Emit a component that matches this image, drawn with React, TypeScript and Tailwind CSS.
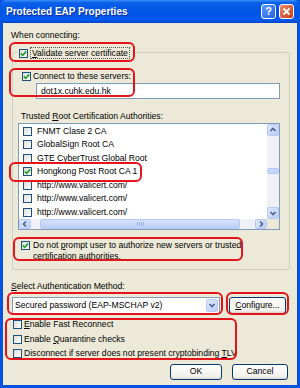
import React from "react";

const Box = ({ checked }: { checked?: boolean }) => (
  <span className="flex h-[9px] w-[9px] shrink-0 items-center justify-center border border-[#1C5180] bg-[linear-gradient(135deg,#DCDCD7,#FFFFFF)]">
    {checked && (
      <svg width="7" height="7" viewBox="0 0 7 7">
        <path d="M0.8 3.4 L2.7 5.3 L6.2 1.4" fill="none" stroke="#21A121" strokeWidth="1.6" />
      </svg>
    )}
  </span>
);

const Chevron = ({ dir }: { dir: "up" | "down" | "left" | "right" }) => {
  const d = {
    up: "M1.5 5 L4 2.5 L6.5 5",
    down: "M1.5 3 L4 5.5 L6.5 3",
    left: "M5 1.5 L2.5 4 L5 6.5",
    right: "M3 1.5 L5.5 4 L3 6.5",
  }[dir];
  return (
    <svg width="8" height="8" viewBox="0 0 8 8">
      <path d={d} fill="none" stroke="#4D6185" strokeWidth="1.6" />
    </svg>
  );
};

const ScrollBtn = ({ dir, className }: { dir: "up" | "down" | "left" | "right"; className: string }) => (
  <div className={`flex items-center justify-center rounded-[2px] border border-[#B7CAF5] bg-[linear-gradient(135deg,#DDE7FE,#BACDF8)] ${className}`}>
    <Chevron dir={dir} />
  </div>
);

const RedBox = ({ className }: { className: string }) => (
  <div className={`pointer-events-none absolute rounded-[6px] border-2 border-[#E4141B] ${className}`} />
);

const certs = [
  { name: "FNMT Clase 2 CA" },
  { name: "GlobalSign Root CA" },
  { name: "GTE CyberTrust Global Root" },
  { name: "Hongkong Post Root CA 1", checked: true },
  { name: "http://www.valicert.com/" },
  { name: "http://www.valicert.com/" },
  { name: "http://www.valicert.com/" },
];

const XpButton = ({ children, className }: { children: React.ReactNode; className: string }) => (
  <div className={`flex items-center justify-center rounded-[3px] border border-[#003C74] bg-[linear-gradient(to_bottom,#FFFFFF,#F0F0EA_85%,#D6D0C5)] ${className}`}>
    {children}
  </div>
);

export default function App() {
  return (
    <div className="relative flex h-[388px] w-[300px] flex-col bg-[#0553E1] font-['Liberation_Sans',Arial,sans-serif] text-[8.6px] leading-[11px] text-black">
      {/* title bar */}
      <div className="flex h-[23px] shrink-0 items-center justify-between rounded-t-[6px] bg-[linear-gradient(to_bottom,#3D8DF8_0%,#0A60EA_12%,#0055E5_50%,#0059EE_85%,#0048CC_100%)] pl-[6px] pr-[6px]">
        <span className="text-[10px] font-bold text-white [text-shadow:1px_1px_0_#0A2F9C]">Protected EAP Properties</span>
        <div className="flex gap-[3px]">
          <div className="flex h-[15px] w-[15px] items-center justify-center rounded-[3px] border border-white bg-[linear-gradient(135deg,#5E9BFF,#1F5FE9)] text-[11px] font-bold leading-none text-white">
            ?
          </div>
          <div className="flex h-[15px] w-[15px] items-center justify-center rounded-[3px] border border-white bg-[linear-gradient(135deg,#EE8A66,#C8391A)]">
            <svg width="9" height="9" viewBox="0 0 9 9">
              <path d="M1.5 1.5 L7.5 7.5 M7.5 1.5 L1.5 7.5" stroke="white" strokeWidth="1.8" />
            </svg>
          </div>
        </div>
      </div>

      {/* body */}
      <div className="mx-[3px] mb-[3px] flex flex-1 flex-col bg-[#ECE9D8]">
        <div className="mt-[7px] pl-[8px]">When connecting:</div>

        {/* group box */}
        <div className="ml-[9px] mr-[7px] mt-[11px] flex flex-col rounded-[3px] border border-[#D0D0BF] pb-[6.5px]">
          <div className="-mt-[6px] ml-[4px] flex h-[12px] w-fit items-center gap-[2px] bg-[#ECE9D8] px-[2px]">
            <Box checked />
            <span className="border border-dotted border-[#555] px-[1px] leading-[10px]">
              <span className="underline">V</span>alidate server certificate
            </span>
          </div>

          <div className="mt-[11.5px] flex h-[11px] items-center gap-[2px] pl-[9px]">
            <Box checked />
            <span>Connect to these servers:</span>
          </div>
          <div className="ml-[23px] mr-[9px] mt-[1.5px] flex h-[16px] items-center border border-[#7F9DB9] bg-white pl-[4px]">
            dot1x.cuhk.edu.hk
          </div>

          <div className="mt-[11.5px] pl-[8px]">
            Trusted <span className="underline">R</span>oot Certification Authorities:
          </div>

          {/* listbox */}
          <div className="ml-[5px] mr-[9px] mt-[1.5px] grid h-[107px] grid-cols-[1fr_12px] grid-rows-[1fr_10px] border border-[#7F9DB9] bg-white">
            <div className="flex flex-col overflow-hidden pt-[0.5px]">
              {certs.map((c, i) => (
                <div key={i} className="flex h-[13.5px] shrink-0 items-center gap-[5px] whitespace-nowrap pl-[4px]">
                  <Box checked={c.checked} />
                  <span>{c.name}</span>
                </div>
              ))}
            </div>
            <div className="flex flex-col bg-[#F0F1F6]">
              <ScrollBtn dir="up" className="h-[12px] w-[12px]" />
              <div className="flex flex-1 flex-col">
                <div className="mt-[32px] h-[6px] rounded-[2px] border border-[#B7CAF5] bg-[#C6D6FA]" />
              </div>
              <ScrollBtn dir="down" className="h-[12px] w-[12px]" />
            </div>
            <div className="flex bg-[#F0F1F6]">
              <ScrollBtn dir="left" className="h-[10px] w-[12px]" />
              <div className="flex flex-1 items-center">
                <div className="ml-[9px] flex h-[10px] w-[200px] items-center justify-center rounded-[2px] border border-[#B7CAF5] bg-[linear-gradient(to_bottom,#D4E0FC,#BFD0F8)]">
                  <div className="flex gap-[1px]">
                    <span className="h-[4px] w-[1px] bg-[#9FB5EA]" />
                    <span className="h-[4px] w-[1px] bg-[#9FB5EA]" />
                    <span className="h-[4px] w-[1px] bg-[#9FB5EA]" />
                    <span className="h-[4px] w-[1px] bg-[#9FB5EA]" />
                  </div>
                </div>
              </div>
              <ScrollBtn dir="right" className="h-[10px] w-[12px]" />
            </div>
            <div className="bg-[#ECE9D8]" />
          </div>

          <div className="mt-[9.5px] flex gap-[3px] pl-[8px] leading-[11.5px]">
            <div className="flex h-[11.5px] items-center">
              <Box checked />
            </div>
            <span>
              Do not <span className="underline">p</span>rompt user to authorize new servers or trusted
              <br />
              certification authorities.
            </span>
          </div>
        </div>

        <div className="mt-[10.5px] pl-[8px]">
          <span className="underline">S</span>elect Authentication Method:
        </div>

        <div className="ml-[9px] mt-[5px] flex h-[17px] gap-[9px]">
          <div className="flex w-[208px] items-center justify-between border border-[#7F9DB9] bg-white pl-[2px] pr-[1px]">
            <span>Secured password (EAP-MSCHAP v2)</span>
            <ScrollBtn dir="down" className="h-[13px] w-[12px]" />
          </div>
          <XpButton className="w-[57px]">
            <span>
              <span className="underline">C</span>onfigure...
            </span>
          </XpButton>
        </div>

        <div className="mt-[3.75px] flex flex-col pl-[10px]">
          <div className="flex h-[14.5px] items-center gap-[2px]">
            <Box />
            <span>
              <span className="underline">E</span>nable Fast Reconnect
            </span>
          </div>
          <div className="flex h-[14.5px] items-center gap-[2px]">
            <Box />
            <span>
              Enable <span className="underline">Q</span>uarantine checks
            </span>
          </div>
          <div className="flex h-[14.5px] items-center gap-[2px]">
            <Box />
            <span>
              Disconnect if server does not present cryptobinding <span className="underline">T</span>LV
            </span>
          </div>
        </div>

        <div className="mr-[9px] mt-[2.75px] flex justify-end gap-[10px]">
          <XpButton className="h-[16px] w-[52px]">OK</XpButton>
          <XpButton className="h-[16px] w-[56px]">Cancel</XpButton>
        </div>
      </div>

      {/* annotation boxes */}
      <RedBox className="left-[9px] top-[42px] h-[20px] w-[126px]" />
      <RedBox className="left-[9px] top-[68px] h-[29px] w-[126px]" />
      <RedBox className="left-[9px] top-[162px] h-[20px] w-[133px]" />
      <RedBox className="left-[13px] top-[237px] h-[24px] w-[230px]" />
      <RedBox className="left-[7px] top-[292px] h-[23px] w-[216px]" />
      <RedBox className="left-[226px] top-[292px] h-[23px] w-[63px]" />
      <RedBox className="left-[5px] top-[318px] h-[42px] w-[232px]" />
    </div>
  );
}
